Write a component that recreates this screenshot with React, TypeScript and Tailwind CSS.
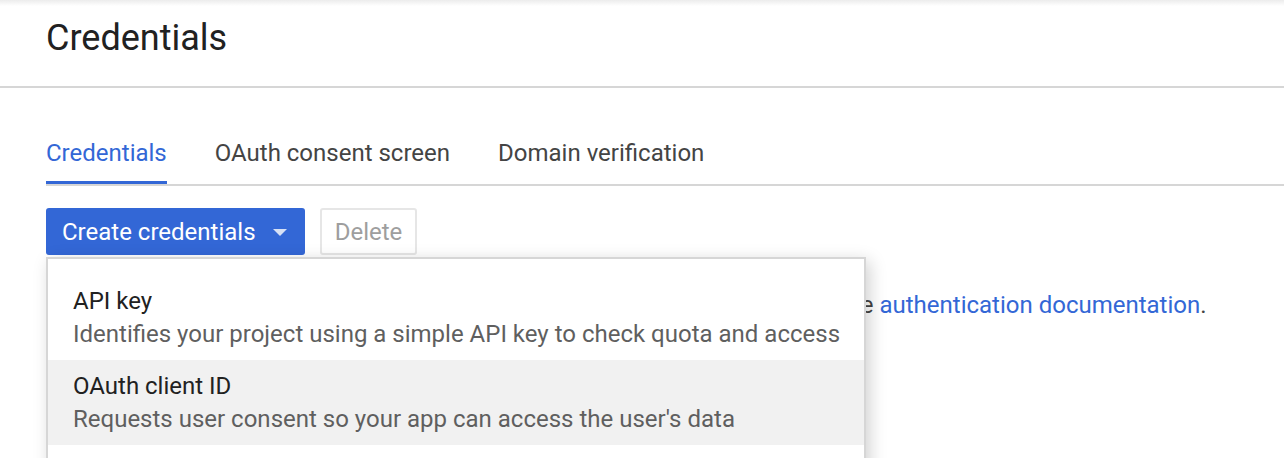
import React from "react";

const tabs = ["Credentials", "OAuth consent screen", "Domain verification"];

const items = [
  { title: "API key", desc: "Identifies your project using a simple API key to check quota and access" },
  { title: "OAuth client ID", desc: "Requests user consent so your app can access the user's data", active: true },
];

export default function App() {
  return (
    <div className="relative h-[458px] w-full overflow-hidden bg-white" style={{ fontFamily: "Roboto, 'Liberation Sans', sans-serif" }}>
      {/* header */}
      <div className="h-[6px] bg-gradient-to-b from-[#ececec] to-white" />
      <div className="flex h-[82px] items-center border-b-2 border-[#d6d6d6] pl-[46px]">
        <h1 className="-mt-[17px] text-[36px] leading-[44px] text-[#212121]">Credentials</h1>
      </div>

      <div className="pl-[46px] pt-[47px]">
        {/* tabs */}
        <div className="flex gap-[48px] border-b-2 border-[#d6d6d6]">
          {tabs.map((t, i) => (
            <div
              key={t}
              className={`border-b-[3px] pb-[10px] text-[24px] leading-[36px] ${
                i === 0 ? "border-[#3367d6] text-[#3367d6]" : "border-transparent text-[#444]"
              }`}
            >
              {t}
            </div>
          ))}
        </div>

        {/* buttons */}
        <div className="mt-[22px] flex gap-[15px]">
          <button className="flex h-[47px] w-[259px] items-center rounded-[3px] bg-[#3367d6] pl-[16px] text-[24px] text-white">
            Create credentials
            <span className="ml-[17px] mt-[2px] h-0 w-0 border-x-[7px] border-t-[7px] border-x-transparent border-t-[#d6e0f5]" />
          </button>
          <button className="h-[47px] w-[97px] rounded-[3px] border-2 border-[#e6e6e6] text-[24px] text-[#9e9e9e]">
            Delete
          </button>
        </div>

        <p className="mt-[32px] whitespace-nowrap text-[24px] leading-[36px] text-[#444]">
          Create credentials to access your enabled APIs. For more information, see the{" "}
          <span className="text-[#3367d6]">authentication documentation</span>.
        </p>
      </div>

      {/* dropdown menu */}
      <div className="absolute left-[46px] top-[257px] w-[820px] border-2 border-[#d6d6d6] bg-white pt-[16px] shadow-[4px_4px_16px_rgba(0,0,0,0.18)]">
        {items.map((it) => (
          <div key={it.title} className={`h-[85px] pl-[25px] pt-[11px] ${it.active ? "bg-[#f1f1f1]" : ""}`}>
            <div className="text-[24px] leading-[30px] text-[#212121]">{it.title}</div>
            <div className="mt-[3px] text-[24px] leading-[30px] text-[#5f5f5f]">{it.desc}</div>
          </div>
        ))}
        <div className="h-[40px]" />
      </div>
    </div>
  );
}
